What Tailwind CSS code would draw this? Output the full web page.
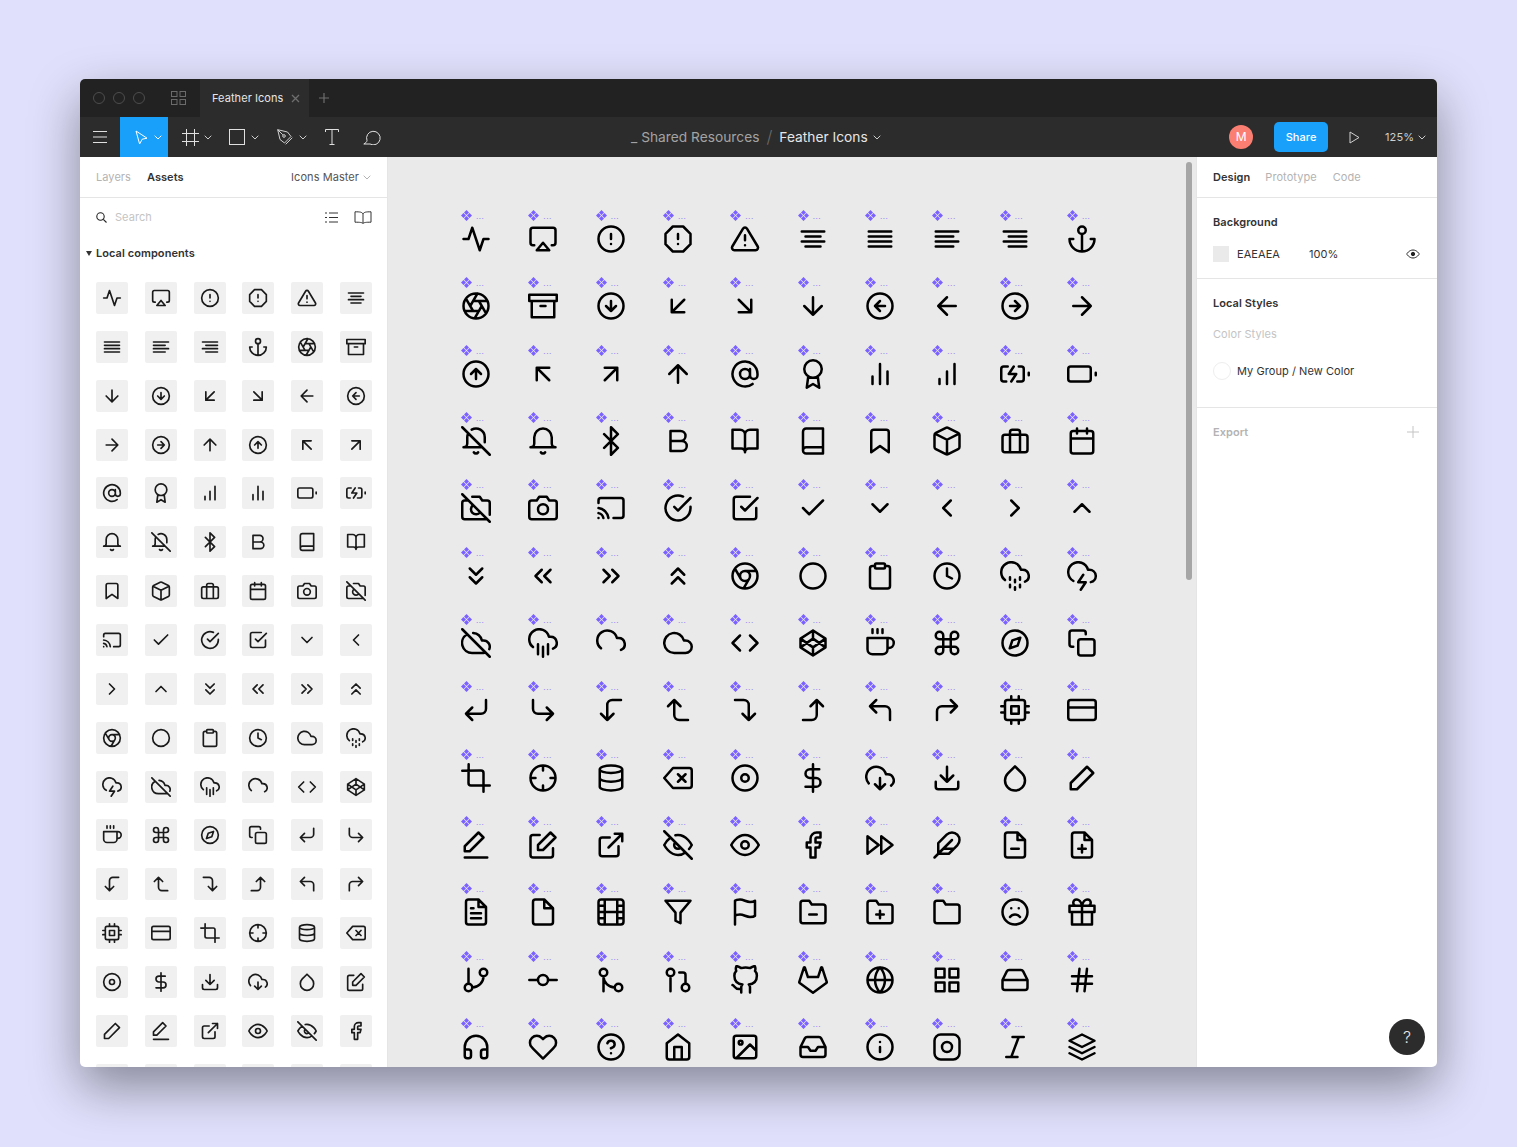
<!doctype html>
<html lang="en">
<head>
<meta charset="UTF-8">
<title>Feather Icons - Figma</title>
<script src="https://cdn.jsdelivr.net/npm/@tailwindcss/browser@4"></script>
</head>
<body class="w-[1517px] h-[1147px] overflow-hidden bg-[#e0e0fc] pt-[79px] pl-[80px] [font-family:Inter,sans-serif] text-[11px] tracking-[0.06px] text-[#333]">
<div class="w-[1357px] h-[988px] rounded-[5px] overflow-hidden flex flex-col bg-white shadow-[0_20px_50px_rgba(0,0,0,0.4)] relative">

  <!-- title bar -->
  <div class="h-[38px] shrink-0 bg-[#222222] flex items-center">
    <div class="flex gap-[8px] pl-[13px] w-[120px] text-[#4d4d4d]">
      <div class="w-[12px] h-[12px] rounded-full border border-[#4d4d4d]"></div>
      <div class="w-[12px] h-[12px] rounded-full border border-[#4d4d4d]"></div>
      <div class="w-[12px] h-[12px] rounded-full border border-[#4d4d4d]"></div>
      <svg class="ml-[18px] shrink-0 -mt-[1px]" width="15" height="14" viewBox="0 0 15 14" fill="none" stroke="#6b6b6b"><rect x=".5" y=".5" width="5.5" height="5"/><rect x="9" y=".5" width="5.5" height="5"/><rect x=".5" y="8.5" width="5.5" height="5"/><rect x="9" y="8.5" width="5.5" height="5"/></svg>
    </div>
    <div class="w-[109px] h-full bg-[#2c2c2c] flex items-center pl-[12px] text-[#e6e6e6]">
      <span>Feather Icons</span>
      <svg class="ml-[8px]" width="9" height="9" viewBox="0 0 9 9" stroke="#6e6e6e" stroke-width="1.3"><path d="M1 1l7 7M8 1L1 8"/></svg>
    </div>
    <svg class="ml-[10px]" width="10" height="10" viewBox="0 0 10 10" stroke="#6e6e6e" stroke-width="1.2"><path d="M5 0v10M0 5h10"/></svg>
  </div>

  <!-- toolbar -->
  <div class="h-[40px] shrink-0 bg-[#2c2c2c] flex items-center text-[#e0e0e0]">
    <div class="w-[40px] h-full flex items-center justify-center">
      <svg width="14" height="14" viewBox="0 0 14 14" stroke="#e0e0e0"><path d="M0 1.5h14M0 7h14M0 12.5h14"/></svg>
    </div>
    <div class="w-[48px] h-full bg-[#18a0fb] flex items-center pl-[15px]">
      <svg width="13" height="15" viewBox="0 0 13 15" fill="none" stroke="#fff" stroke-linejoin="round"><path d="M1 1l11 7.2-4.8 1L4.6 14z"/></svg>
      <svg class="ml-[6px]" width="8" height="5" viewBox="0 0 8 5" fill="none" stroke="#fff"><path d="M.7.7 4 4 7.3.7"/></svg>
    </div>
    <div class="w-[48px] h-full flex items-center pl-[14px]">
      <svg width="17" height="17" viewBox="0 0 17 17" fill="none" stroke="#e0e0e0"><path d="M4.5 0v17M12.5 0v17M0 4.5h17M0 12.5h17"/></svg>
      <svg class="ml-[5px]" width="8" height="5" viewBox="0 0 8 5" fill="none" stroke="#ccc"><path d="M.7.7 4 4 7.3.7"/></svg>
    </div>
    <div class="w-[48px] h-full flex items-center pl-[13px]">
      <svg width="16" height="16" viewBox="0 0 16 16" fill="none" stroke="#e0e0e0"><rect x=".5" y=".5" width="15" height="15"/></svg>
      <svg class="ml-[6px]" width="8" height="5" viewBox="0 0 8 5" fill="none" stroke="#ccc"><path d="M.7.7 4 4 7.3.7"/></svg>
    </div>
    <div class="w-[48px] h-full flex items-center pl-[13px]">
      <svg width="16" height="16" viewBox="0 0 16 16" fill="none" stroke="#d0d0d0" stroke-linejoin="round"><path d="M.7.7 10.5 3 14 7.5 7.5 14 3 10.5zM.7.7 5.8 5.8M15.3 8.7 8.7 15.3"/><circle cx="7" cy="7" r="1.3"/></svg>
      <svg class="ml-[6px]" width="8" height="5" viewBox="0 0 8 5" fill="none" stroke="#ccc"><path d="M.7.7 4 4 7.3.7"/></svg>
    </div>
    <div class="w-[40px] h-full flex items-center justify-center">
      <svg width="14" height="16" viewBox="0 0 14 16" fill="none" stroke="#e0e0e0"><path d="M.5 3V.5h13V3M7 .5v15M4.5 15.5h5"/></svg>
    </div>
    <div class="w-[40px] h-full flex items-center justify-center">
      <svg width="18" height="16" viewBox="0 0 18 16" fill="none" stroke="#e0e0e0" stroke-linejoin="round"><path d="M4 11.5A6.8 6.8 0 1 1 7 15H.8c1.7-.8 3-2 3.2-3.5z"/></svg>
    </div>
    <div class="ml-[239px] flex items-center text-[13.75px] tracking-normal whitespace-nowrap">
      <span class="text-[#a3a3a3]">_ Shared Resources</span>
      <span class="text-[#6b6b6b] text-[17px] font-light mx-[7px] leading-none">/</span>
      <span class="text-[#e6e6e6]">Feather Icons</span>
      <svg class="ml-[5px] mt-[1px]" width="8" height="5" viewBox="0 0 8 5" fill="none" stroke="#ccc"><path d="M.7.7 4 4 7.3.7"/></svg>
    </div>
    <div class="ml-auto flex items-center pr-[11px]">
      <div class="w-[24px] h-[24px] rounded-full bg-[#fb7e72] flex items-center justify-center text-[12px] text-[#fff]">M</div>
      <div class="ml-[21px] w-[54px] h-[30px] rounded-[5px] bg-[#18a0fb] flex items-center justify-center text-white font-medium">Share</div>
      <svg class="ml-[21px]" width="11" height="13" viewBox="0 0 11 13" fill="none" stroke="#d0d0d0"><path d="M1 1l9 5.5-9 5.5z"/></svg>
      <span class="ml-[25px] text-[#cfcfcf]">125%</span>
      <svg class="ml-[4px]" width="8" height="5" viewBox="0 0 8 5" fill="none" stroke="#ccc"><path d="M.7.7 4 4 7.3.7"/></svg>
    </div>
  </div>

  <div class="flex-1 flex min-h-0">
    <!-- left panel -->
    <div class="w-[308px] shrink-0 border-r border-[#e5e5e5] flex flex-col overflow-hidden">
      <div class="h-[41px] shrink-0 border-b border-[#e5e5e5] flex items-center pl-[16px] pr-[16px]">
        <span class="text-[#b3b3b3]">Layers</span>
        <span class="ml-[16px] font-semibold">Assets</span>
        <span class="ml-auto text-[#555]">Icons Master</span>
        <svg class="ml-[4px]" width="8" height="5" viewBox="0 0 8 5" fill="none" stroke="#b3b3b3"><path d="M.7.7 4 4 7.3.7"/></svg>
      </div>
      <div class="h-[38px] shrink-0 flex items-center pl-[16px] pr-[15px]">
        <svg width="11" height="11" viewBox="0 0 11 11" fill="none" stroke="#222" stroke-width="1.1"><circle cx="4.5" cy="4.5" r="3.7"/><path d="M7.3 7.3 10.5 10.5"/></svg>
        <span class="ml-[8px] text-[#c4c4c4]">Search</span>
        <svg class="ml-auto" width="13" height="11" viewBox="0 0 13 11" stroke="#333"><path d="M0 1h2M4 1h9M0 5.5h2M4 5.5h9M0 10h2M4 10h9"/></svg>
        <svg class="ml-[16px]" width="18" height="13" viewBox="0 0 18 13" fill="none" stroke="#333"><path d="M9 3C8 1 6 .8 1 .8v10.4c5 0 7 .2 8 1.3 1-1.1 3-1.3 8-1.3V.8C12 .8 10 1 9 3zv9.5"/></svg>
      </div>
      <div class="h-[18px] shrink-0 flex items-center pl-[6px] mt-[8px]">
        <svg width="6" height="5" viewBox="0 0 6 5" fill="#333"><path d="M0 0h6L3 5z"/></svg>
        <span class="ml-[4px] font-semibold">Local components</span>
      </div>
      <div id="assets" class="grid grid-cols-[repeat(6,32px)] gap-x-[16.8px] gap-y-[16.87px] pl-[16px] pt-[20px]"></div>
    </div>

    <!-- canvas -->
    <div class="flex-1 bg-[#eaeaea] relative overflow-hidden">
      <div id="canvas" class="grid grid-cols-[repeat(10,30px)] gap-x-[37.33px] gap-y-[23.33px] pl-[73px] pt-[53px]"></div>
      <div class="absolute right-[4px] top-[5px] w-[6px] h-[418px] rounded-full bg-[#a6a6a6]"></div>
    </div>

    <!-- right panel -->
    <div class="w-[241px] shrink-0 border-l border-[#e5e5e5] relative">
      <div class="h-[41px] border-b border-[#e5e5e5] flex items-center pl-[16px] gap-[15px]">
        <span class="font-semibold">Design</span>
        <span class="text-[#b3b3b3]">Prototype</span>
        <span class="text-[#b3b3b3] ml-[1px]">Code</span>
      </div>
      <div class="h-[81px] border-b border-[#e5e5e5] pl-[16px] pr-[17px] pt-[16px]">
        <div class="font-semibold leading-[16px]">Background</div>
        <div class="flex items-center mt-[16px] h-[16px]">
          <div class="w-[16px] h-[16px] bg-[#eaeaea]"></div>
          <span class="ml-[8px] w-[72px]">EAEAEA</span>
          <span>100%</span>
          <svg class="ml-auto" width="14" height="10" viewBox="0 0 14 10" fill="none" stroke="#222"><path d="M.7 5S3 1 7 1s6.3 4 6.3 4S11 9 7 9 .7 5 .7 5z"/><circle cx="7" cy="5" r="1.7" fill="#222"/></svg>
        </div>
      </div>
      <div class="h-[129px] border-b border-[#e5e5e5] pl-[16px] pt-[16px]">
        <div class="font-semibold leading-[16px]">Local Styles</div>
        <div class="text-[#c4c4c4] leading-[16px] mt-[15px]">Color Styles</div>
        <div class="flex items-center mt-[21px]">
          <div class="w-[18px] h-[18px] rounded-full border border-[#eeeeee] -mt-[1px]"></div>
          <span class="ml-[6px]">My Group / New Color</span>
        </div>
      </div>
      <div class="h-[48px] flex items-center pl-[16px] pr-[18px]">
        <span class="font-semibold text-[#b3b3b3]">Export</span>
        <svg class="ml-auto" width="12" height="12" viewBox="0 0 12 12" stroke="#c4c4c4"><path d="M6 0v12M0 6h12"/></svg>
      </div>
      <div class="absolute right-[12px] bottom-[12px] w-[36px] h-[36px] rounded-full bg-[#2c2c2c] flex items-center justify-center text-[#e6e6e6] text-[16px] font-light">?</div>
    </div>
  </div>
</div>

<script>
  const c = (x, y, r) => `M${x - r} ${y}a${r} ${r} 0 1 0 ${2 * r} 0a${r} ${r} 0 1 0-${2 * r} 0`;
  const rr = (x, y, w, h, r = 0) => r
    ? `M${x + r} ${y}h${w - 2 * r}a${r} ${r} 0 0 1 ${r} ${r}v${h - 2 * r}a${r} ${r} 0 0 1-${r} ${r}h-${w - 2 * r}a${r} ${r} 0 0 1-${r}-${r}v-${h - 2 * r}a${r} ${r} 0 0 1 ${r}-${r}z`
    : `M${x} ${y}h${w}v${h}h-${w}z`;
  const O = c(12, 12, 10);
  const F = "M14 2H6a2 2 0 0 0-2 2v16a2 2 0 0 0 2 2h12a2 2 0 0 0 2-2V8zM14 2 14 8 20 8";
  const D = "M22 19a2 2 0 0 1-2 2H4a2 2 0 0 1-2-2V5a2 2 0 0 1 2-2h5l2 3h9a2 2 0 0 1 2 2z";
  const H = "M5.45 5.11L2 12v6a2 2 0 0 0 2 2h16a2 2 0 0 0 2-2v-6l-3.45-6.89A2 2 0 0 0 16.76 4H7.24a2 2 0 0 0-1.79 1.11z";

  const icons = {
    "activity": "M22 12 18 12 15 21 9 3 6 12 2 12",
    "airplay": "M5 17H4a2 2 0 0 1-2-2V5a2 2 0 0 1 2-2h16a2 2 0 0 1 2 2v10a2 2 0 0 1-2 2h-1M12 15 17 21 7 21z",
    "alert-circle": O + "M12 8 12 12M12 16 12.01 16",
    "alert-octagon": "M7.86 2 16.14 2 22 7.86 22 16.14 16.14 22 7.86 22 2 16.14 2 7.86zM12 8 12 12M12 16 12.01 16",
    "alert-triangle": "M10.29 3.86L1.82 18a2 2 0 0 0 1.71 3h16.94a2 2 0 0 0 1.71-3L13.71 3.86a2 2 0 0 0-3.42 0zM12 9 12 13M12 17 12.01 17",
    "align-center": "M18 10 6 10M21 6 3 6M21 14 3 14M18 18 6 18",
    "align-justify": "M21 10 3 10M21 6 3 6M21 14 3 14M21 18 3 18",
    "align-left": "M17 10 3 10M21 6 3 6M21 14 3 14M17 18 3 18",
    "align-right": "M21 10 7 10M21 6 3 6M21 14 3 14M21 18 7 18",
    "anchor": c(12, 5, 3) + "M12 22 12 8M5 12H2a10 10 0 0 0 20 0h-3",
    "aperture": O + "M14.31 8 20.05 17.94M9.69 8 21.17 8M7.38 12 13.12 2.06M9.69 16 3.95 6.06M14.31 16 2.83 16M16.62 12 10.88 21.94",
    "archive": "M21 8 21 21 3 21 3 8M1 3h22v5H1zM10 12 14 12",
    "arrow-down-circle": O + "M8 12 12 16 16 12M12 8 12 16",
    "arrow-down-left": "M17 7 7 17M17 17 7 17 7 7",
    "arrow-down-right": "M7 7 17 17M17 7 17 17 7 17",
    "arrow-down": "M12 5 12 19M19 12 12 19 5 12",
    "arrow-left-circle": O + "M12 8 8 12 12 16M16 12 8 12",
    "arrow-left": "M19 12 5 12M12 19 5 12 12 5",
    "arrow-right-circle": O + "M12 16 16 12 12 8M8 12 16 12",
    "arrow-right": "M5 12 19 12M12 5 19 12 12 19",
    "arrow-up-circle": O + "M16 12 12 8 8 12M12 16 12 8",
    "arrow-up-left": "M17 17 7 7M7 17 7 7 17 7",
    "arrow-up-right": "M7 17 17 7M7 7 17 7 17 17",
    "arrow-up": "M12 19 12 5M5 12 12 5 19 12",
    "at-sign": c(12, 12, 4) + "M16 8v5a3 3 0 0 0 6 0v-1a10 10 0 1 0-3.92 7.94",
    "award": c(12, 8, 7) + "M8.21 13.89 7 23 12 20 17 23 15.79 13.88",
    "bar-chart-2": "M18 20 18 10M12 20 12 4M6 20 6 14",
    "bar-chart": "M12 20 12 10M18 20 18 4M6 20 6 16",
    "battery-charging": "M5 18H3a2 2 0 0 1-2-2V8a2 2 0 0 1 2-2h3.19M15 6h2a2 2 0 0 1 2 2v8a2 2 0 0 1-2 2h-3.19M23 13 23 11M11 6 7 12 13 12 9 18",
    "battery": rr(1, 6, 18, 12, 2) + "M23 13 23 11",
    "bell-off": "M8.56 2.9A7 7 0 0 1 19 9v4m-2 4H2a3 3 0 0 0 3-3V9a7 7 0 0 1 .78-3.22M13.73 21a2 2 0 0 1-3.46 0M1 1 23 23",
    "bell": "M22 17H2a3 3 0 0 0 3-3V9a7 7 0 0 1 14 0v5a3 3 0 0 0 3 3zm-8.27 4a2 2 0 0 1-3.46 0",
    "bluetooth": "M6.5 6.5 17.5 17.5 12 23 12 1 17.5 6.5 6.5 17.5",
    "bold": "M6 4h8a4 4 0 0 1 4 4 4 4 0 0 1-4 4H6zM6 12h9a4 4 0 0 1 4 4 4 4 0 0 1-4 4H6z",
    "book-open": "M2 3h6a4 4 0 0 1 4 4v14a3 3 0 0 0-3-3H2zM22 3h-6a4 4 0 0 0-4 4v14a3 3 0 0 1 3-3h7z",
    "book": "M4 19.5A2.5 2.5 0 0 1 6.5 17H20M6.5 2H20v20H6.5A2.5 2.5 0 0 1 4 19.5v-15A2.5 2.5 0 0 1 6.5 2z",
    "bookmark": "M19 21l-7-5-7 5V5a2 2 0 0 1 2-2h10a2 2 0 0 1 2 2z",
    "box": "M12.89 1.45l8 4A2 2 0 0 1 22 7.24v9.53a2 2 0 0 1-1.11 1.79l-8 4a2 2 0 0 1-1.79 0l-8-4a2 2 0 0 1-1.1-1.8V7.24a2 2 0 0 1 1.11-1.79l8-4a2 2 0 0 1 1.78 0zM2.32 6.16 12 11 21.68 6.16M12 22.76 12 11",
    "briefcase": rr(2, 7, 20, 14, 2) + "M16 21V5a2 2 0 0 0-2-2h-4a2 2 0 0 0-2 2v16",
    "calendar": rr(3, 4, 18, 18, 2) + "M16 2 16 6M8 2 8 6M3 10 21 10",
    "camera-off": "M1 1 23 23M21 21H3a2 2 0 0 1-2-2V8a2 2 0 0 1 2-2h3m3-3h6l2 3h4a2 2 0 0 1 2 2v9.34m-7.72-2.06a4 4 0 1 1-5.56-5.56",
    "camera": "M23 19a2 2 0 0 1-2 2H3a2 2 0 0 1-2-2V8a2 2 0 0 1 2-2h4l2-3h6l2 3h4a2 2 0 0 1 2 2z" + c(12, 13, 4),
    "cast": "M2 16.1A5 5 0 0 1 5.9 20M2 12.05A9 9 0 0 1 9.95 20M2 8V6a2 2 0 0 1 2-2h16a2 2 0 0 1 2 2v12a2 2 0 0 1-2 2h-6M2 20 2.01 20",
    "check-circle": "M22 11.08V12a10 10 0 1 1-5.93-9.14M22 4 12 14.01 9 11.01",
    "check-square": "M9 11 12 14 22 4M21 12v7a2 2 0 0 1-2 2H5a2 2 0 0 1-2-2V5a2 2 0 0 1 2-2h11",
    "check": "M20 6 9 17 4 12",
    "chevron-down": "M6 9 12 15 18 9",
    "chevron-left": "M15 18 9 12 15 6",
    "chevron-right": "M9 18 15 12 9 6",
    "chevron-up": "M18 15 12 9 6 15",
    "chevrons-down": "M7 13 12 18 17 13M7 6 12 11 17 6",
    "chevrons-left": "M11 17 6 12 11 7M18 17 13 12 18 7",
    "chevrons-right": "M13 17 18 12 13 7M6 17 11 12 6 7",
    "chevrons-up": "M17 11 12 6 7 11M17 18 12 13 7 18",
    "chrome": O + c(12, 12, 4) + "M21.17 8 12 8M3.95 6.06 8.54 14M10.88 21.94 15.46 14",
    "circle": O,
    "clipboard": "M16 4h2a2 2 0 0 1 2 2v14a2 2 0 0 1-2 2H6a2 2 0 0 1-2-2V6a2 2 0 0 1 2-2h2" + rr(8, 2, 8, 4, 1),
    "clock": O + "M12 6 12 12 16 14",
    "cloud-drizzle": "M8 19 8 21M8 13 8 15M16 19 16 21M16 13 16 15M12 21 12 23M12 15 12 17M20 16.58A5 5 0 0 0 18 7h-1.26A8 8 0 1 0 4 15.25",
    "cloud-lightning": "M19 16.9A5 5 0 0 0 18 7h-1.26a8 8 0 1 0-11.62 9M13 11 9 17 15 17 11 23",
    "cloud-off": "M22.61 16.95A5 5 0 0 0 18 10h-1.26a8 8 0 0 0-7.05-6M5 5a8 8 0 0 0 4 15h9a5 5 0 0 0 1.7-.3M1 1 23 23",
    "cloud-rain": "M16 13 16 21M8 13 8 21M12 15 12 23M20 16.58A5 5 0 0 0 18 7h-1.26A8 8 0 1 0 4 15.25",
    "cloud-snow": "M20 17.58A5 5 0 0 0 18 8h-1.26A8 8 0 1 0 4 16.25",
    "cloud": "M18 10h-1.26A8 8 0 1 0 9 20h9a5 5 0 0 0 0-10z",
    "code": "M16 18 22 12 16 6M8 6 2 12 8 18",
    "codepen": "M12 2 22 8.5 22 15.5 12 22 2 15.5 2 8.5zM12 22 12 15.5M22 8.5 12 15.5 2 8.5M2 15.5 12 8.5 22 15.5M12 2 12 8.5",
    "coffee": "M18 8h1a4 4 0 0 1 0 8h-1M2 8h16v9a4 4 0 0 1-4 4H6a4 4 0 0 1-4-4V8zM6 1 6 4M10 1 10 4M14 1 14 4",
    "command": "M18 3a3 3 0 0 0-3 3v12a3 3 0 0 0 3 3 3 3 0 0 0 3-3 3 3 0 0 0-3-3H6a3 3 0 0 0-3 3 3 3 0 0 0 3 3 3 3 0 0 0 3-3V6a3 3 0 0 0-3-3 3 3 0 0 0-3 3 3 3 0 0 0 3 3h12a3 3 0 0 0 3-3 3 3 0 0 0-3-3z",
    "compass": O + "M16.24 7.76 14.12 14.12 7.76 16.24 9.88 9.88z",
    "copy": rr(9, 9, 13, 13, 2) + "M5 15H4a2 2 0 0 1-2-2V4a2 2 0 0 1 2-2h9a2 2 0 0 1 2 2v1",
    "corner-down-left": "M9 10 4 15 9 20M20 4v7a4 4 0 0 1-4 4H4",
    "corner-down-right": "M15 10 20 15 15 20M4 4v7a4 4 0 0 0 4 4h12",
    "corner-left-down": "M14 15 9 20 4 15M20 4h-7a4 4 0 0 0-4 4v12",
    "corner-left-up": "M14 9 9 4 4 9M20 20h-7a4 4 0 0 1-4-4V4",
    "corner-right-down": "M10 15 15 20 20 15M4 4h7a4 4 0 0 1 4 4v12",
    "corner-right-up": "M10 9 15 4 20 9M4 20h7a4 4 0 0 0 4-4V4",
    "corner-up-left": "M9 14 4 9 9 4M20 20v-7a4 4 0 0 0-4-4H4",
    "corner-up-right": "M15 14 20 9 15 4M4 20v-7a4 4 0 0 1 4-4h12",
    "cpu": rr(4, 4, 16, 16, 2) + rr(9, 9, 6, 6) + "M9 1 9 4M15 1 15 4M9 20 9 23M15 20 15 23M20 9 23 9M20 14 23 14M1 9 4 9M1 14 4 14",
    "credit-card": rr(1, 4, 22, 16, 2) + "M1 10 23 10",
    "crop": "M6.13 1L6 16a2 2 0 0 0 2 2h15M1 6.13L16 6a2 2 0 0 1 2 2v15",
    "crosshair": O + "M22 12 18 12M6 12 2 12M12 6 12 2M12 22 12 18",
    "database": "M3 5a9 3 0 1 0 18 0a9 3 0 1 0-18 0M21 12c0 1.66-4 3-9 3s-9-1.34-9-3M3 5v14c0 1.66 4 3 9 3s9-1.34 9-3V5",
    "delete": "M21 4H8l-7 8 7 8h13a2 2 0 0 0 2-2V6a2 2 0 0 0-2-2zM18 9 12 15M12 9 18 15",
    "disc": O + c(12, 12, 3),
    "dollar-sign": "M12 1 12 23M17 5H9.5a3.5 3.5 0 0 0 0 7h5a3.5 3.5 0 0 1 0 7H6",
    "download-cloud": "M8 17 12 21 16 17M12 12 12 21M20.88 18.09A5 5 0 0 0 18 9h-1.26A8 8 0 1 0 3 16.29",
    "download": "M21 15v4a2 2 0 0 1-2 2H5a2 2 0 0 1-2-2v-4M7 10 12 15 17 10M12 15 12 3",
    "droplet": "M12 2.69l5.66 5.66a8 8 0 1 1-11.31 0z",
    "edit-2": "M16 3 21 8 8 21 3 21 3 16z",
    "edit-3": "M14 2 18 6 7 17 3 17 3 13zM3 22 21 22",
    "edit": "M20 14.66V20a2 2 0 0 1-2 2H4a2 2 0 0 1-2-2V6a2 2 0 0 1 2-2h5.34M18 2 22 6 12 16 8 16 8 12z",
    "external-link": "M18 13v6a2 2 0 0 1-2 2H5a2 2 0 0 1-2-2V8a2 2 0 0 1 2-2h6M15 3 21 3 21 9M10 14 21 3",
    "eye-off": "M17.94 17.94A10.07 10.07 0 0 1 12 20c-7 0-11-8-11-8a18.45 18.45 0 0 1 5.06-5.94M9.9 4.24A9.12 9.12 0 0 1 12 4c7 0 11 8 11 8a18.5 18.5 0 0 1-2.16 3.19m-6.72-1.07a3 3 0 1 1-4.24-4.24M1 1 23 23",
    "eye": "M1 12s4-8 11-8 11 8 11 8-4 8-11 8-11-8-11-8z" + c(12, 12, 3),
    "facebook": "M18 2h-3a5 5 0 0 0-5 5v3H7v4h3v8h4v-8h3l1-4h-4V7a1 1 0 0 1 1-1h3z",
    "fast-forward": "M13 19 22 12 13 5zM2 19 11 12 2 5z",
    "feather": "M20.24 12.24a6 6 0 0 0-8.49-8.49L5 10.5V19h8.5zM16 8 2 22M17.5 15 9 15",
    "file-minus": F + "M9 15 15 15",
    "file-plus": F + "M12 18 12 12M9 15 15 15",
    "file-text": F + "M16 13 8 13M16 17 8 17M10 9 8 9",
    "file": "M13 2H6a2 2 0 0 0-2 2v16a2 2 0 0 0 2 2h12a2 2 0 0 0 2-2V9zM13 2 13 9 20 9",
    "film": rr(2, 2, 20, 20, 2.18) + "M7 2 7 22M17 2 17 22M2 12 22 12M2 7 7 7M2 17 7 17M17 17 22 17M17 7 22 7",
    "filter": "M22 3 2 3 10 12.46 10 19 14 21 14 12.46z",
    "flag": "M4 15s1-1 4-1 5 2 8 2 4-1 4-1V3s-1 1-4 1-5-2-8-2-4 1-4 1zM4 22 4 15",
    "folder-minus": D + "M9 14 15 14",
    "folder-plus": D + "M12 11 12 17M9 14 15 14",
    "folder": D,
    "frown": O + "M16 16s-1.5-2-4-2-4 2-4 2M9 9 9.01 9M15 9 15.01 9",
    "gift": "M20 12 20 22 4 22 4 12M2 7h20v5H2zM12 22 12 7M12 7H7.5a2.5 2.5 0 0 1 0-5C11 2 12 7 12 7zM12 7h4.5a2.5 2.5 0 0 0 0-5C13 2 12 7 12 7z",
    "git-branch": "M6 3 6 15" + c(18, 6, 3) + c(6, 18, 3) + "M18 9a9 9 0 0 1-9 9",
    "git-commit": c(12, 12, 4) + "M1.05 12 7 12M17.01 12 22.96 12",
    "git-merge": c(18, 18, 3) + c(6, 6, 3) + "M6 21V9a9 9 0 0 0 9 9",
    "git-pull-request": c(18, 18, 3) + c(6, 6, 3) + "M13 6h3a2 2 0 0 1 2 2v7M6 9 6 21",
    "github": "M9 19c-5 1.5-5-2.5-7-3m14 6v-3.87a3.37 3.37 0 0 0-.94-2.61c3.14-.35 6.44-1.54 6.44-7A5.44 5.44 0 0 0 20 4.77 5.07 5.07 0 0 0 19.91 1S18.73.65 16 2.48a13.38 13.38 0 0 0-7 0C6.27.65 5.09 1 5.09 1A5.07 5.07 0 0 0 5 4.77a5.44 5.44 0 0 0-1.5 3.78c0 5.42 3.3 6.61 6.44 7A3.37 3.37 0 0 0 9 18.13V22",
    "gitlab": "M22.65 14.39L12 22.13 1.35 14.39a.84.84 0 0 1-.3-.94l1.22-3.78 2.44-7.51A.42.42 0 0 1 4.82 2a.43.43 0 0 1 .58 0 .42.42 0 0 1 .11.18l2.44 7.49h8.1l2.44-7.51A.42.42 0 0 1 18.6 2a.43.43 0 0 1 .58 0 .42.42 0 0 1 .11.18l2.44 7.51L23 13.45a.84.84 0 0 1-.35.94z",
    "globe": O + "M2 12 22 12M12 2a15.3 15.3 0 0 1 4 10 15.3 15.3 0 0 1-4 10 15.3 15.3 0 0 1-4-10 15.3 15.3 0 0 1 4-10z",
    "grid": rr(3, 3, 7, 7) + rr(14, 3, 7, 7) + rr(14, 14, 7, 7) + rr(3, 14, 7, 7),
    "hard-drive": "M22 12 2 12" + H,
    "hash": "M4 9 20 9M4 15 20 15M10 3 8 21M16 3 14 21",
    "headphones": "M3 18v-6a9 9 0 0 1 18 0v6M21 19a2 2 0 0 1-2 2h-1a2 2 0 0 1-2-2v-3a2 2 0 0 1 2-2h3zM3 19a2 2 0 0 0 2 2h1a2 2 0 0 0 2-2v-3a2 2 0 0 0-2-2H3z",
    "heart": "M20.84 4.61a5.5 5.5 0 0 0-7.78 0L12 5.67l-1.06-1.06a5.5 5.5 0 0 0-7.78 7.78l1.06 1.06L12 21.23l7.78-7.78 1.06-1.06a5.5 5.5 0 0 0 0-7.78z",
    "help-circle": O + "M9.09 9a3 3 0 0 1 5.83 1c0 2-3 3-3 3M12 17 12.01 17",
    "home": "M3 9l9-7 9 7v11a2 2 0 0 1-2 2H5a2 2 0 0 1-2-2zM9 22 9 12 15 12 15 22",
    "image": rr(3, 3, 18, 18, 2) + c(8.5, 8.5, 1.5) + "M21 15 16 10 5 21",
    "inbox": "M22 12 16 12 14 15 10 15 8 12 2 12" + H,
    "info": O + "M12 16 12 12M12 8 12.01 8",
    "instagram": rr(2, 2, 20, 20, 5) + c(12, 12, 4),
    "italic": "M19 4 10 4M14 20 5 20M15 4 9 20",
    "layers": "M12 2 2 7 12 12 22 7zM2 17 12 22 22 17M2 12 12 17 22 12",
  };

  const canvasOrder = "activity airplay alert-circle alert-octagon alert-triangle align-center align-justify align-left align-right anchor aperture archive arrow-down-circle arrow-down-left arrow-down-right arrow-down arrow-left-circle arrow-left arrow-right-circle arrow-right arrow-up-circle arrow-up-left arrow-up-right arrow-up at-sign award bar-chart-2 bar-chart battery-charging battery bell-off bell bluetooth bold book-open book bookmark box briefcase calendar camera-off camera cast check-circle check-square check chevron-down chevron-left chevron-right chevron-up chevrons-down chevrons-left chevrons-right chevrons-up chrome circle clipboard clock cloud-drizzle cloud-lightning cloud-off cloud-rain cloud-snow cloud code codepen coffee command compass copy corner-down-left corner-down-right corner-left-down corner-left-up corner-right-down corner-right-up corner-up-left corner-up-right cpu credit-card crop crosshair database delete disc dollar-sign download-cloud download droplet edit-2 edit-3 edit external-link eye-off eye facebook fast-forward feather file-minus file-plus file-text file film filter flag folder-minus folder-plus folder frown gift git-branch git-commit git-merge git-pull-request github gitlab globe grid hard-drive hash headphones heart help-circle home image inbox info instagram italic layers".split(" ");
  const assetOrder = "activity airplay alert-circle alert-octagon alert-triangle align-center align-justify align-left align-right anchor aperture archive arrow-down arrow-down-circle arrow-down-left arrow-down-right arrow-left arrow-left-circle arrow-right arrow-right-circle arrow-up arrow-up-circle arrow-up-left arrow-up-right at-sign award bar-chart bar-chart-2 battery battery-charging bell bell-off bluetooth bold book book-open bookmark box briefcase calendar camera camera-off cast check check-circle check-square chevron-down chevron-left chevron-right chevron-up chevrons-down chevrons-left chevrons-right chevrons-up chrome circle clipboard clock cloud cloud-drizzle cloud-lightning cloud-off cloud-rain cloud-snow code codepen coffee command compass copy corner-down-left corner-down-right corner-left-down corner-left-up corner-right-down corner-right-up corner-up-left corner-up-right cpu credit-card crop crosshair database delete disc dollar-sign download download-cloud droplet edit edit-2 edit-3 external-link eye eye-off facebook".split(" ");

  const svg = (name, cls) => `<svg class="${cls}" viewBox="0 0 24 24" fill="none" stroke="currentColor" stroke-width="2" stroke-linecap="round" stroke-linejoin="round"><path d="${icons[name]}"/></svg>`;

  document.getElementById("assets").innerHTML = assetOrder.map(name =>
    `<div class="w-[32px] h-[32px] rounded-[2px] bg-[#f0f0f0] flex items-center justify-center text-[#1a1a1a]">${svg(name, "w-[20px] h-[20px]")}</div>`
  ).join("") + `<div class="w-[32px] h-[32px] rounded-[2px] bg-[#f0f0f0]"></div>`.repeat(6);

  document.getElementById("canvas").innerHTML = canvasOrder.map(name =>
    `<div class="flex flex-col h-[44px] w-[30px]">
      <div class="h-[14px] flex items-start">
        <svg class="w-[11px] h-[11px] shrink-0" viewBox="0 0 11 11" fill="#7b61ff"><path d="M5.5 0 8 2.5 5.5 5 3 2.5zM8.5 3 11 5.5 8.5 8 6 5.5zM2.5 3 5 5.5 2.5 8 0 5.5zM5.5 6 8 8.5 5.5 11 3 8.5z"/></svg>
        <span class="ml-[4px] text-[8px] leading-[13px] tracking-[0.5px] text-[#7b61ff] opacity-80 whitespace-nowrap">...</span>
      </div>
      ${svg(name, "w-[30px] h-[30px] text-black shrink-0")}
    </div>`
  ).join("");
</script>
</body>
</html>
